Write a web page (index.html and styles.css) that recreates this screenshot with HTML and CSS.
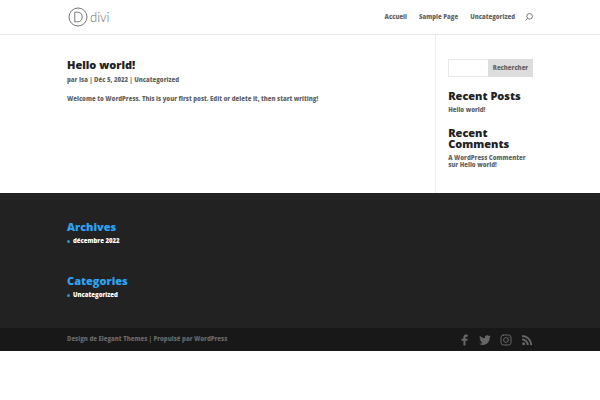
FILE: index.html
```html
<!DOCTYPE html>
<html lang="fr">
<head>
<meta charset="utf-8">
<meta name="viewport" content="width=device-width, initial-scale=1">
<title>Divi</title>
<link rel="stylesheet" href="styles.css">
</head>
<body>
<header class="site-header">
  <div class="container header-row">
    <a class="logo" href="#" aria-label="divi">
      <svg class="logo-mark" viewBox="0 0 20 20" aria-hidden="true"><circle cx="10" cy="10" r="9"/><path d="M6.800 5.200h2.700c3 0 4.700 1.800 4.700 4.800s-1.700 4.800-4.700 4.800H6.800z"/></svg>
      <span class="logo-text">divi</span>
    </a>
    <nav class="main-nav">
      <a href="#">Accueil</a>
      <a href="#">Sample Page</a>
      <a href="#">Uncategorized</a>
      <button class="search-toggle" type="button" aria-label="Rechercher">
        <svg viewBox="0 0 8 8" aria-hidden="true"><circle cx="4.600" cy="3.300" r="2.800"/><path d="M2.600 5.300L.5 7.400"/></svg>
      </button>
    </nav>
  </div>
</header>
<main class="container content">
  <article class="post">
    <h1>Hello world!</h1>
    <p class="meta">par <a href="#">Isa</a> | Déc 5, 2022 | <a href="#">Uncategorized</a></p>
    <p class="body-text">Welcome to WordPress. This is your first post. Edit or delete it, then start writing!</p>
  </article>
  <aside class="sidebar">
    <form class="search">
      <input type="text" aria-label="Rechercher">
      <button type="button">Rechercher</button>
    </form>
    <section class="widget">
      <h2>Recent Posts</h2>
      <p><a href="#">Hello world!</a></p>
    </section>
    <section class="widget">
      <h2>Recent Comments</h2>
      <p><a href="#">A WordPress Commenter</a> sur <a href="#">Hello world!</a></p>
    </section>
  </aside>
</main>
<footer class="site-footer">
  <div class="container footer-widgets">
    <section>
      <h2>Archives</h2>
      <ul><li><a href="#">décembre 2022</a></li></ul>
    </section>
    <section>
      <h2>Categories</h2>
      <ul><li><a href="#">Uncategorized</a></li></ul>
    </section>
  </div>
  <div class="footer-bottom">
    <div class="container bottom-row">
      <p>Design de <a href="#">Elegant Themes</a> | Propulsé par <a href="#">WordPress</a></p>
      <div class="social">
        <a href="#" aria-label="Facebook"><svg viewBox="0 0 12 12" aria-hidden="true"><path d="M5.400 11.400V6.800H3.500V4.700h1.900V3.400C5.400 1.600 6.400.6 8.100.6h1.600v2.100H8.500c-.7 0-1 .3-1 .9v1.100h2.200l-.3 2.100H7.500v4.600z"/></svg></a>
        <a href="#" aria-label="Twitter"><svg viewBox="0 0 24 24" aria-hidden="true"><path d="M23.600 4.900c-.8.400-1.800.7-2.700.8 1-.6 1.700-1.500 2.100-2.600-.9.500-1.900.9-3 1.100a4.800 4.800 0 0 0-8.200 4.400C7.800 8.400 4.300 6.500 1.900 3.600a4.800 4.800 0 0 0 1.500 6.300c-.8 0-1.500-.2-2.200-.6a4.800 4.800 0 0 0 3.800 4.800c-.7.200-1.400.2-2.100.1a4.800 4.800 0 0 0 4.400 3.300A9.500 9.500 0 0 1 .3 19.500a13.500 13.500 0 0 0 20.900-12c1-.7 1.800-1.600 2.400-2.600z"/></svg></a>
        <a href="#" aria-label="Instagram"><svg class="outline" viewBox="0 0 12 12" aria-hidden="true"><rect x="1" y="1" width="10" height="10" rx="2.500"/><circle cx="6" cy="6" r="2.400"/><path d="M8.700 3.300h.3"/></svg></a>
        <a href="#" aria-label="RSS"><svg viewBox="0 0 12 12" aria-hidden="true"><circle cx="2.600" cy="9.700" r="1.500"/><path d="M1.100 4.500v2a4.600 4.600 0 0 1 4.600 4.600h2a6.600 6.600 0 0 0-6.600-6.600zM1.100 1v2a8.100 8.100 0 0 1 8.100 8.100h2A10.100 10.100 0 0 0 1.100 1z"/></svg></a>
      </div>
    </div>
  </div>
</footer>
</body>
</html>
```
FILE: styles.css
```css
* { box-sizing: border-box; margin: 0; padding: 0; }
body {
  background: #fff;
  color: #666;
  font: 800 6px/7px "Open Sans", sans-serif;
}
a { color: inherit; text-decoration: none; }
h1, h2 { color: #222; font-size: 11px; line-height: 11px; font-weight: 800; }
ul { list-style: none; }
button, input { font: inherit; color: inherit; border: 0; }
.container { width: 78%; margin: 0 auto; padding: 0 1px; }

.site-header { border-bottom: 1px solid #e8e8e8; }
.header-row { display: flex; justify-content: space-between; align-items: center; height: 34px; }
.logo { display: flex; align-items: center; gap: 2px; padding-left: 1px; color: #666; }
.logo-mark { width: 20px; height: 20px; fill: none; stroke: #777; }
.logo-text { font: 300 13px/20px Lato, sans-serif; }
.main-nav { display: flex; align-items: center; gap: 12px; color: #666; }
.search-toggle { display: flex; background: none; margin-left: -2px; }
.search-toggle svg { width: 8px; height: 8px; fill: none; stroke: #777; }

.content { display: flex; min-height: 158px; }
.post { flex: 1; padding-top: 24px; }
.meta { margin-top: 7px; }
.body-text { margin-top: 12px; }
.sidebar { width: 21%; border-left: 1px solid #eee; padding: 24px 0 0 12px; }
.search { display: flex; height: 18px; }
.search input { flex: 1; min-width: 0; border: 1px solid #e8e8e8; border-right: 0; background: #fff; }
.search button { width: 45px; background: #ddd; color: #666; }
.widget { margin-top: 13px; }
.widget h2 { margin-bottom: 6px; }

.site-footer { background: #222; }
.footer-widgets { padding-top: 28px; padding-bottom: 29px; display: grid; gap: 30px; }
.footer-widgets h2 { color: #2ea3f2; margin-bottom: 6px; }
.footer-widgets li { display: flex; align-items: center; gap: 3px; color: #fff; }
.footer-widgets li::before { content: ""; width: 3px; height: 3px; border-radius: 50%; background: #2e8fd2; }
.footer-bottom { background: #181818; }
.bottom-row { display: flex; justify-content: space-between; align-items: center; height: 23px; }
.social { display: flex; gap: 9px; }
.social svg { display: block; width: 12px; height: 12px; fill: #666; }
.social .outline { fill: none; stroke: #666; stroke-linecap: round; }
```
